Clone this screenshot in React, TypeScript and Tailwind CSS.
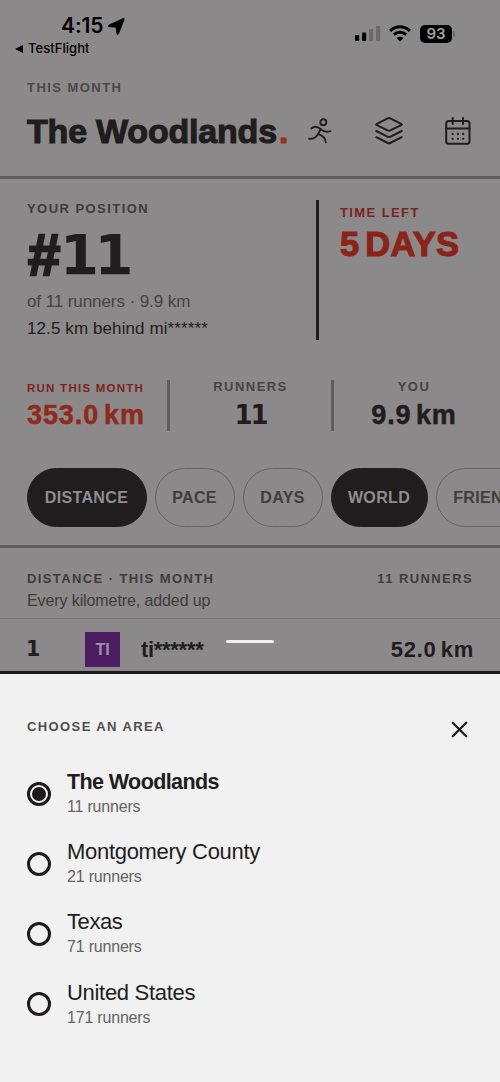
import React from 'react';
import { X } from 'lucide-react';

const areas = [
  { name: 'The Woodlands', runners: 11, style: 'pt-px text-[21.5px] font-bold tracking-[-0.6px]' },
  { name: 'Montgomery County', runners: 21, style: 'text-[22px] tracking-[-0.3px]' },
  { name: 'Texas', runners: 71, style: 'text-[22px] tracking-[-0.4px]' },
  { name: 'United States', runners: 171, style: 'text-[22px] tracking-[-0.3px]' },
];

const filters = [
  { label: 'DISTANCE', active: true, width: 'w-[120px]' },
  { label: 'PACE', active: false, width: 'w-20' },
  { label: 'DAYS', active: false, width: 'w-20' },
  { label: 'WORLD', active: true, width: 'w-[97px]' },
  { label: 'FRIENDS', active: false, width: 'w-[108px]' },
];

const StatusBar: React.FC = () => (
  <div className="flex h-[78px] justify-between font-['Inter',sans-serif] text-black">
    <div className="pl-[15px] pt-[14px]">
      <div className="flex h-6 items-center pl-[46px]">
        <span className="w-[47px] text-[21px] font-semibold leading-6 tracking-[-0.1px]">4:15</span>
        <svg width="17" height="17" viewBox="0 0 17 17">
          <path d="M16.2 1.6 10.5 15.9c-.4 1-1.5.9-1.7-.2L7.9 9.3 1.2 8.8C0 8.7-.2 7.5.9 7L15 .5c1-.4 1.6.1 1.2 1.1Z" fill="currentColor" stroke="currentColor" strokeWidth="0.6" />
        </svg>
      </div>
      <div className="flex h-[20px] items-center gap-[5px] pt-px text-[13px] font-medium tracking-[0.05px]">
        <svg width="8" height="8" viewBox="0 0 8 8">
          <path d="M0 4 8 0v8Z" fill="currentColor" />
        </svg>
        TestFlight
      </div>
    </div>
    <div className="mt-[25px] flex h-[17px] items-center pr-[45px]">
      <svg width="26" height="17" viewBox="0 0 26 17">
        <rect x="0" y="10" width="4.2" height="6" rx="1" />
        <rect x="7" y="7.5" width="4.2" height="8.5" rx="1" />
        <rect x="14" y="4" width="4.2" height="12" rx="1" fill="#6b6969" />
        <rect x="21" y="1" width="4.2" height="15" rx="1" fill="#6b6969" />
      </svg>
      <svg className="ml-2" width="22" height="17" viewBox="0 0 22 17">
        <g fill="none" stroke="currentColor" strokeWidth="3">
          <path d="M1.1 5.9C6.7.3 15.3.3 20.9 5.9" />
          <path d="M4.8 9.7c3.5-3.4 8.9-3.4 12.4 0" />
        </g>
        <path d="M11 16.4 7.7 13.1c1.9-1.7 4.7-1.7 6.6 0Z" fill="currentColor" />
      </svg>
      <div className="ml-[9px] flex h-[18px] w-[32px] items-center justify-center rounded-[5px] bg-black text-[15px] font-semibold leading-[18px] text-[#a3a1a1]">
        93
      </div>
      <div className="ml-[1px] h-[6px] w-[2px] rounded-r-full bg-[#6b6969]" />
    </div>
  </div>
);

const RunnerIcon: React.FC = () => (
  <svg width="24" height="26" viewBox="0 0 24 26" fill="none" stroke="currentColor" strokeWidth="1.9" strokeLinecap="round" strokeLinejoin="round">
    <circle cx="15.3" cy="4.3" r="3" />
    <path d="M3.5 10.5c2.5-2.3 6.2-1.8 9.2.6 2.5 2.7 5.5 3.3 9.8 2.1" />
    <path d="M12.7 11.1 10.5 15.3C8.5 19.5 5.5 21.2 1 20.8" />
    <path d="M10.4 16.1c4.3 1.4 7 3.2 7.4 8.3" />
  </svg>
);

const LayersIcon: React.FC = () => (
  <svg width="28" height="28" viewBox="0 0 28 28" fill="none" stroke="currentColor" strokeWidth="2" strokeLinecap="round" strokeLinejoin="round">
    <path d="M12.7 1.4 1.9 6.8c-.8.4-.8 1 0 1.4l10.8 5.2c.9.4 1.7.4 2.6 0l10.8-5.2c.8-.4.8-1 0-1.4L15.3 1.4c-.9-.4-1.7-.4-2.6 0Z" />
    <path d="m1.3 14 11.6 5.8c.8.4 1.4.4 2.2 0L26.7 14" />
    <path d="m1.3 20.2 11.6 5.8c.8.4 1.4.4 2.2 0l11.6-5.8" />
  </svg>
);

const CalendarIcon: React.FC = () => (
  <svg width="26" height="28" viewBox="0 0 26 28" fill="none" stroke="currentColor" strokeWidth="2" strokeLinecap="round" strokeLinejoin="round">
    <rect x="1.2" y="4" width="23.3" height="22.8" rx="2.5" />
    <path d="M1.2 11.5h23.3M7.7 1v6M18 1v6" />
    <path d="M7.7 17v.01M13 17v.01M18.2 17v.01M7.7 21.8v.01M13 21.8v.01M18.2 21.8v.01" strokeWidth="2.3" />
  </svg>
);

const Header: React.FC = () => (
  <header className="h-[101px] border-b-[3px] border-[#5f5d5d] px-[27px]">
    <div className="h-[19px] text-[13px] font-bold leading-[19px] tracking-[1.45px] text-[#4a4848]">THIS MONTH</div>
    <div className="mt-[16px] flex h-[35px] items-center">
      <h1 className="w-[281px] whitespace-nowrap pt-px text-[34px] font-bold leading-[35px] tracking-[-0.2px] [-webkit-text-stroke:1.1px_currentColor]">
        The Woodlands<span className="ml-[2px] text-[#9e2b22]">.</span>
      </h1>
      <RunnerIcon />
      <div className="ml-[43px] flex gap-[42px]">
        <LayersIcon />
        <CalendarIcon />
      </div>
    </div>
  </header>
);

const Position: React.FC = () => (
  <section className="flex h-[201px] pl-[27px] pt-[21px]">
    <div className="w-[289px]">
      <div className="h-[18px] text-[13px] font-bold leading-[18px] tracking-[1.45px] text-[#3d3b3b]">YOUR POSITION</div>
      <div className="mt-[7px] flex h-[60px] font-['DejaVu_Sans',sans-serif] text-[56px] font-bold leading-[60px] tracking-[-4.5px]">
        <span className="w-[33px] pl-px font-['Liberation_Sans',sans-serif] text-[58px] tracking-normal [-webkit-text-stroke:2.5px_currentColor]">#</span>
        11
      </div>
      <div className="mt-[4px] h-[26px] text-[17px] leading-[26px] tracking-[-0.08px] text-[#454343]">of 11 runners · 9.9 km</div>
      <div className="h-[28px] text-[17px] leading-[28px] tracking-[0.1px]">12.5 km behind mi******</div>
    </div>
    <div className="h-[140px] w-[3px] bg-[#1f1d1d]" />
    <div className="pl-[21px] pt-[3px]">
      <div className="h-[20px] text-[13px] font-bold leading-[20px] tracking-[1.4px] text-[#7b2420]">TIME LEFT</div>
      <div className="mt-[3px] h-[36px] whitespace-nowrap text-[34.5px] font-bold leading-[36px] tracking-[0.3px] text-[#8b2318] [word-spacing:-4px] [-webkit-text-stroke:1.1px_currentColor]">
        5 DAYS
      </div>
    </div>
  </section>
);

const Stats: React.FC = () => (
  <section className="flex h-[88px] pl-[27px] text-[27px] font-bold leading-[30px]">
    <div className="w-[140px] whitespace-nowrap">
      <div className="mt-[-1px] h-[18px] text-[11.5px] leading-[18px] tracking-[1.25px] text-[#7b2420]">RUN THIS MONTH</div>
      <div className="mt-[3px] tracking-[0.9px] text-[#8f2a1c] [word-spacing:-3.5px] [-webkit-text-stroke:0.5px_currentColor]">353.0 km</div>
    </div>
    <div className="h-[51px] w-[3px] bg-[#5f5d5d]" />
    <div className="w-[161px] text-center">
      <div className="mt-[-2px] h-[18px] text-[13px] leading-[18px] tracking-[1.45px] text-[#454343]">RUNNERS</div>
      <div className="mt-[4px] font-['DejaVu_Sans',sans-serif] text-[26px] tracking-[-2px]">11</div>
    </div>
    <div className="h-[51px] w-[3px] bg-[#5f5d5d]" />
    <div className="w-[160px] text-center">
      <div className="mt-[-2px] h-[18px] text-[13px] leading-[18px] tracking-[1.45px] text-[#454343]">YOU</div>
      <div className="mt-[4px] tracking-[0.8px] [word-spacing:-3.5px] [-webkit-text-stroke:0.5px_currentColor]">9.9 km</div>
    </div>
  </section>
);

const Filters: React.FC = () => (
  <div className="flex h-[77px] gap-2 overflow-hidden pl-[27px]">
    {filters.map((f) => (
      <button
        key={f.label}
        className={`flex h-[59px] shrink-0 items-center justify-center rounded-full border pr-px text-[16px] font-bold tracking-[0.35px] ${f.width} ${
          f.active ? 'border-[#1f1d1d] bg-[#1f1d1d] text-[#8f8d8d]' : 'border-[#656363] text-[#3f3d3d]'
        }`}
      >
        {f.label}
      </button>
    ))}
  </div>
);

const Leaderboard: React.FC = () => (
  <section className="border-t-[3px] border-[#5f5d5d]">
    <div className="h-[71px] border-b border-[#757373] px-[27px] pt-[21px]">
      <div className="flex h-[19px] justify-between text-[13px] font-bold leading-[19px] tracking-[1.4px] text-[#3d3b3b]">
        <span>DISTANCE · THIS MONTH</span>
        <span>11 RUNNERS</span>
      </div>
      <div className="h-[26px] text-[16px] leading-[26px] tracking-[-0.1px] text-[#3d3b3b]">Every kilometre, added up</div>
    </div>
    <div className="flex h-[61px] items-center px-[27px] text-[22px] font-bold">
      <div className="-ml-px w-[59px] font-['DejaVu_Sans',sans-serif] text-[20.5px]">1</div>
      <div className="flex size-[35px] items-center justify-center bg-[#4d1d61] text-[16px] text-[#a18fa8]">TI</div>
      <div className="ml-[21px] flex-1 tracking-[-0.3px]">ti******</div>
      <div className="-mr-px tracking-[0.7px] [word-spacing:-2.5px]">52.0 km</div>
    </div>
  </section>
);

const AreaSheet: React.FC = () => (
  <div className="relative h-[411px] border-t-[3px] border-[#1c1a1a] bg-[#f1f1f1] pl-[27px]">
    <div className="absolute left-[226px] top-[-34px] h-[3px] w-12 rounded-full bg-[#f1f1f1]" />
    <div className="flex h-[84px] items-start justify-between pr-[27px] pt-[43px]">
      <div className="text-[13px] font-bold leading-[19px] tracking-[1.4px] text-[#504e4e]">CHOOSE AN AREA</div>
      <X className="-mt-px size-[27px]" strokeWidth={2} />
    </div>
    {areas.map((area, i) => (
      <div key={area.name} className="flex h-[70.2px] items-center gap-4">
        <div className="mt-px flex size-6 items-center justify-center rounded-full border-[3px] border-[#1c1a1a]">
          {i === 0 && <div className="size-[14px] rounded-full bg-[#1c1a1a]" />}
        </div>
        <div>
          <div className={`h-[27px] leading-[27px] ${area.style}`}>{area.name}</div>
          <div className="text-[16px] leading-[23px] tracking-[-0.2px] text-[#656363]">{area.runners} runners</div>
        </div>
      </div>
    ))}
  </div>
);

const App: React.FC = () => {
  return (
    <div className="h-[1082px] w-[500px] overflow-hidden bg-[#8b8989] font-['Liberation_Sans',sans-serif] text-[#1f1d1d]">
      <div className="h-[671px] overflow-hidden">
        <StatusBar />
        <Header />
        <Position />
        <Stats />
        <Filters />
        <Leaderboard />
      </div>
      <AreaSheet />
    </div>
  );
};

export default App;
